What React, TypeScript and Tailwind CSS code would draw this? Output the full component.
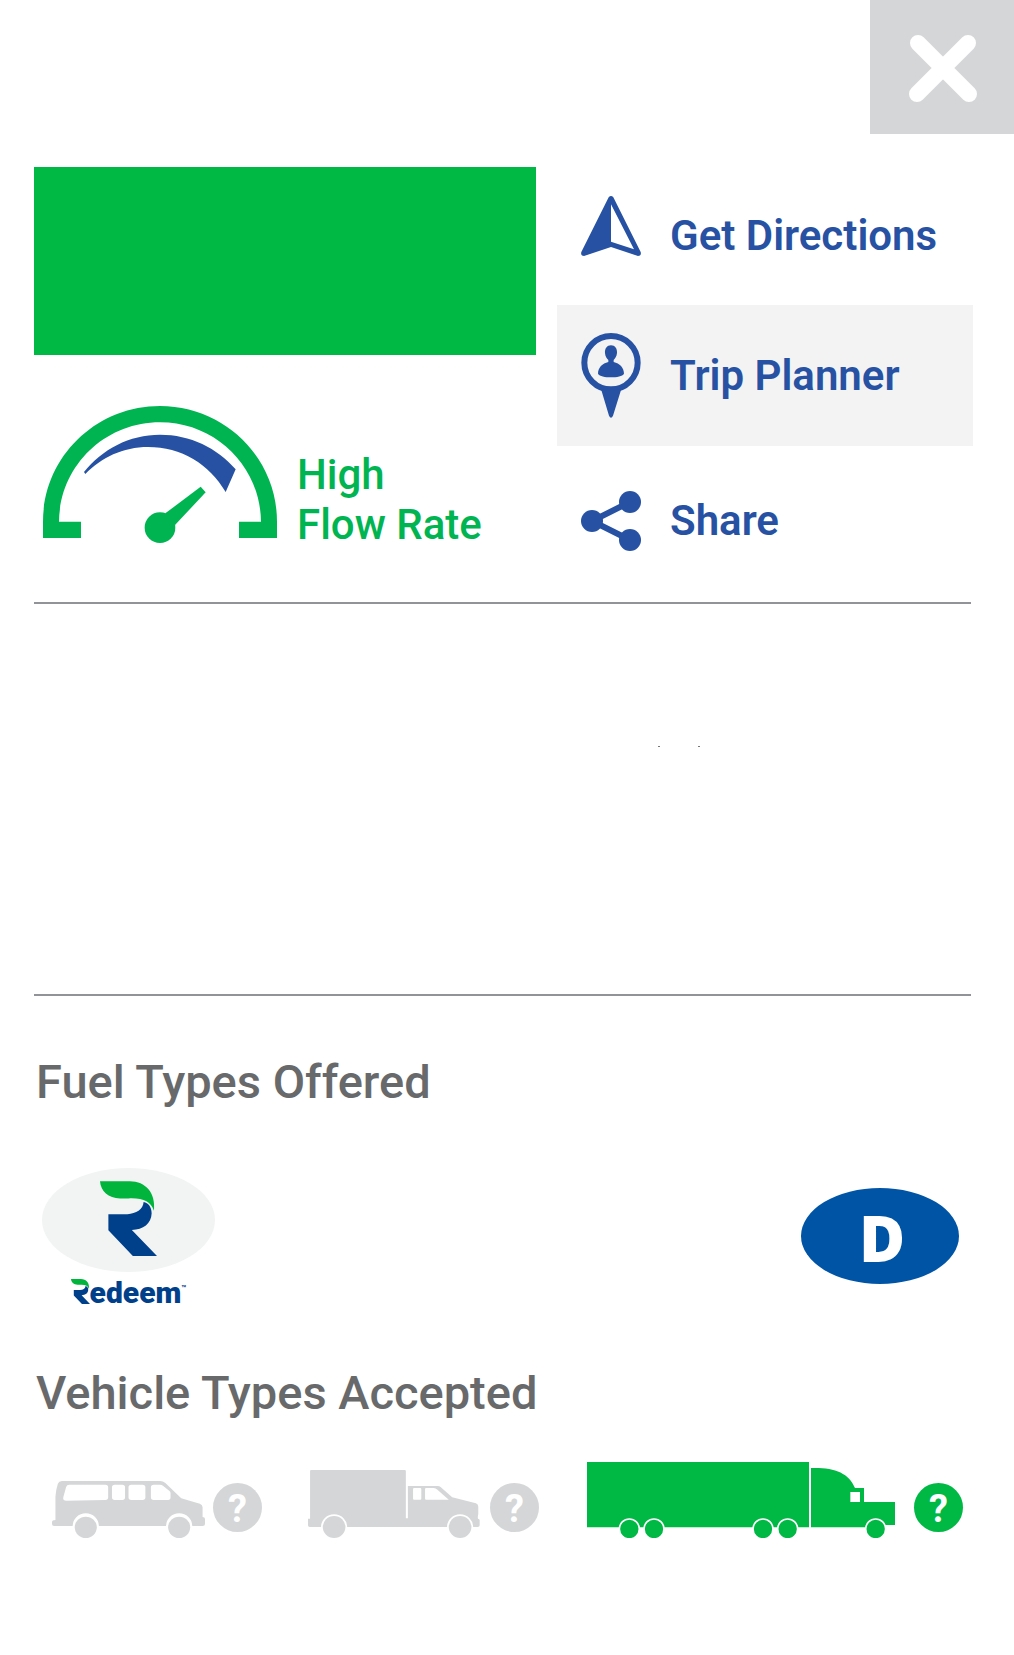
import type { ReactNode } from "react";

const FONT = "font-['Roboto','Open_Sans',sans-serif]";

function Action({ icon, label, className }: { icon: ReactNode; label: string; className: string }) {
  return (
    <button type="button" className={`flex w-full items-center gap-[29px] pl-6 text-left text-[#2752a3] ${className}`}>
      {icon}
      <span className="text-[42px] leading-[50px] font-semibold whitespace-nowrap">{label}</span>
    </button>
  );
}

function DirectionsIcon() {
  return (
    <svg className="mb-5 h-[60px] w-[60px] shrink-0" viewBox="93 78 180 180" fill="#2752a3" aria-hidden="true">
      <path
        fillRule="evenodd"
        d="M176 82Q183 74 190 82L272 246Q275 258 264 258L183 231L102 258Q91 258 94 246ZM183 103V215L252 238Z"
      />
    </svg>
  );
}

function PlannerIcon() {
  return (
    <svg className="h-[85px] w-[60px] shrink-0" viewBox="93 99 180 255" fill="#2752a3" aria-hidden="true">
      <circle cx="183" cy="188" r="80" fill="none" stroke="#2752a3" strokeWidth="18" />
      <path d="M153 267Q183 276 214 267L189 347Q183 359 177 347Z" />
      <path d="M183 136C195 136 202 146 201 159C200 170 195 175 191 180V186C209 190 222 203 222 221C217 229 201 232 183 232S149 229 144 221C144 203 157 190 175 186V180C170 175 166 170 165 159C164 146 171 136 183 136Z" />
    </svg>
  );
}

function ShareIcon() {
  return (
    <svg className="h-[60px] w-[60px] shrink-0" viewBox="93 93 180 180" fill="#2752a3" aria-hidden="true">
      <path d="M240 126L126 183L240 240" fill="none" stroke="#2752a3" strokeWidth="18" />
      <circle cx="126" cy="183" r="33" />
      <circle cx="240" cy="126" r="33" />
      <circle cx="240" cy="240" r="33" />
    </svg>
  );
}

function Gauge() {
  return (
    <svg className="h-[137px] w-[234px] shrink-0" viewBox="69 48 702 411" fill="#00b551" aria-hidden="true">
      <path d="M69 444V395C69 203 226 48 420 48S771 203 771 395V444H657V395H723C721 229 587 97 420 97S119 229 117 395H183V444Z" />
      <path fill="#2752a3" d="M192 246C246 178 328 134 420 134C511 134 592 174 647 238L617 306C568 222 484 171 384 171C310 171 243 203 196 252Z" />
      <path d="M436 370L542 290L557 307L465 405Z" />
      <circle cx="420" cy="413" r="46" />
    </svg>
  );
}

function VanIcon() {
  return (
    <svg className="h-[57px] w-[153px] shrink-0" viewBox="93 363 444 171" preserveAspectRatio="none" fill="#d5d6d8" aria-hidden="true">
      <path
        fillRule="evenodd"
        d="M122 363H407Q415 363 422 369L468 415L522 431Q530 434 530 442V471Q537 471 537 477V492Q537 498 530 498H500A38 38 0 0 0 424 498H229A38 38 0 0 0 153 498H99Q93 498 93 492V486Q93 480 103 480V410Q104 390 110 371Q113 363 122 363ZM143 374Q136 374 134 381L126 411Q123 422 135 422L248 420Q256 420 256 412V382Q256 374 248 374ZM275 374Q267 374 267 382V412Q267 420 275 420H297Q305 420 305 412V382Q305 374 297 374ZM323 374Q315 374 315 382V412Q315 420 323 420H356Q364 420 364 412V382Q364 374 356 374ZM388 374Q380 374 380 382V412Q380 420 388 420H430Q437 420 437 412V399Q437 395 433 392L415 377Q411 374 406 374Z"
      />
      <circle cx="191" cy="502" r="32" />
      <circle cx="462" cy="502" r="32" />
    </svg>
  );
}

function BoxTruckIcon() {
  return (
    <svg className="h-[68px] w-[172px] shrink-0" viewBox="836 330 501 204" preserveAspectRatio="none" fill="#d5d6d8" aria-hidden="true">
      <path
        fillRule="evenodd"
        d="M845 330H1118Q1121 330 1121 333V475H1127V378H1214Q1219 378 1223 382L1256 412L1325 430Q1332 432 1332 440V462Q1330 470 1331 476Q1336 476 1336 481V496Q1336 501 1330 501H1317A38 38 0 0 0 1241 501H950A38 38 0 0 0 874 501H841Q836 501 836 496V476H842V333Q842 330 845 330ZM1145 384Q1142 384 1142 387V416Q1142 419 1145 419H1163Q1166 419 1166 416V387Q1166 384 1163 384ZM1180 384Q1177 384 1177 387V416Q1177 419 1180 419H1246L1213 389Q1208 384 1202 384Z"
      />
      <circle cx="912" cy="501" r="33" />
      <circle cx="1279" cy="501" r="33" />
    </svg>
  );
}

function SemiIcon() {
  return (
    <svg className="h-[76px] w-[308px] shrink-0" viewBox="48 66 924 228" fill="#00b844" aria-hidden="true">
      <path d="M48 66H714V262H48Z" />
      <path
        fillRule="evenodd"
        d="M720 84C790 82 833 98 852 144H879V186H972V255H942L930 262H720ZM838 156V186H867V156Z"
      />
      <g stroke="#ffffff" strokeWidth="5">
        {[175, 249, 576, 650, 914].map((cx) => (
          <circle key={cx} cx={cx} cy="267" r="30" />
        ))}
      </g>
    </svg>
  );
}

function Vehicle({ icon, name, active, className }: { icon: ReactNode; name: string; active?: boolean; className: string }) {
  return (
    <li className={`flex items-end ${className}`}>
      {icon}
      <button
        type="button"
        aria-label={`About ${name}`}
        className={`mb-[6px] flex h-[49px] w-[49px] shrink-0 items-center justify-center rounded-full pt-1 text-[38px] leading-[45px] font-bold text-white ${
          active ? "bg-[#00b844]" : "bg-[#d5d6d8]"
        }`}
      >
        ?
      </button>
    </li>
  );
}

function RedeemMark({ className }: { className: string }) {
  return (
    <svg className={className} viewBox="238 94 170 224" preserveAspectRatio="none" aria-hidden="true">
      <path fill="#00b43c" d="M238 95H327C374 95 405 130 399 183C390 156 367 144 323 146H300C264 147 240 125 238 95Z" />
      <path fill="#00408b" d="M263 193H320C345 192 367 179 368 157C382 159 392 172 392 191C391 221 367 240 333 240L408 318H336L263 241Z" />
    </svg>
  );
}

export default function App() {
  return (
    <main className={`min-h-screen bg-white ${FONT}`}>
      <header className="flex justify-end">
        <button type="button" aria-label="Close" className="h-[134px] w-36 bg-[#d5d6d8]">
          <svg className="h-full w-full" viewBox="0 0 144 134" stroke="#ffffff" strokeWidth="16" strokeLinecap="round" aria-hidden="true">
            <path d="M48 43L99 94M98 43L47 94" />
          </svg>
        </button>
      </header>

      <div className="pt-[33px] pr-[41px] pl-[34px]">
        <section className="grid grid-cols-[502fr_416fr] gap-x-[21px]">
          <div>
            <div className="h-[188px] bg-[#00b844]" />
            <div className="flex items-start gap-5 pt-[51px] pl-[9px]">
              <Gauge />
              <p className="pt-11 text-[42px] leading-[50px] font-medium text-[#00b551]">
                High
                <br />
                Flow Rate
              </p>
            </div>
          </div>
          <nav className="pb-[6px]" aria-label="Station actions">
            <Action icon={<DirectionsIcon />} label="Get Directions" className="h-[138px]" />
            <Action icon={<PlannerIcon />} label="Trip Planner" className="h-[141px] bg-[#f3f3f3]" />
            <Action icon={<ShareIcon />} label="Share" className="h-[150px]" />
          </nav>
        </section>

        <section className="mr-[2px] flex h-[394px] items-start justify-center border-y-2 border-[#929398] pt-[142px]">
          <svg className="ml-[352px] h-[2px] w-[42px]" viewBox="0 0 42 2" fill="#77787b" aria-hidden="true">
            <path d="M0 0H2V1H0ZM40 0H42V1H40Z" />
          </svg>
        </section>

        <section className="pt-14">
          <h2 className="pl-[2px] text-[47px] leading-[60px] font-medium text-[#68696b]">Fuel Types Offered</h2>
          <ul className="flex items-start justify-between pt-14 pr-[14px] pl-2">
            <li className="flex flex-col items-center">
              <div className="flex h-[104px] w-[173px] items-start justify-center rounded-[50%] bg-[#f2f4f4] pt-[13px]">
                <RedeemMark className="h-[75px] w-[57px]" />
              </div>
              <div className="flex items-start pt-[7px] text-[#00408b]">
                <RedeemMark className="h-[25px] w-[19px]" />
                <span className="text-[30px] leading-[28px] font-black">edeem</span>
                <span className="text-[8px] leading-[20px] font-bold">™</span>
              </div>
            </li>
            <li className="mt-5 flex h-24 w-[158px] items-center justify-center rounded-[50%] bg-[#0054a6] pt-1 pl-1 font-['Open_Sans','Roboto',sans-serif] text-[63px] leading-[92px] font-extrabold text-white">
              D
            </li>
          </ul>
        </section>

        <section className="pt-14">
          <h2 className="pl-[2px] text-[47px] leading-[60px] font-medium text-[#68696b]">Vehicle Types Accepted</h2>
          <ul className="flex items-end gap-[46px] pt-[39px] pr-[10px] pb-10 pl-[18px]">
            <Vehicle icon={<VanIcon />} name="vans" className="gap-2" />
            <Vehicle icon={<BoxTruckIcon />} name="box trucks" className="gap-[10px]" />
            <Vehicle icon={<SemiIcon />} name="semi trucks" active className="ml-auto gap-[19px]" />
          </ul>
        </section>
      </div>
    </main>
  );
}
